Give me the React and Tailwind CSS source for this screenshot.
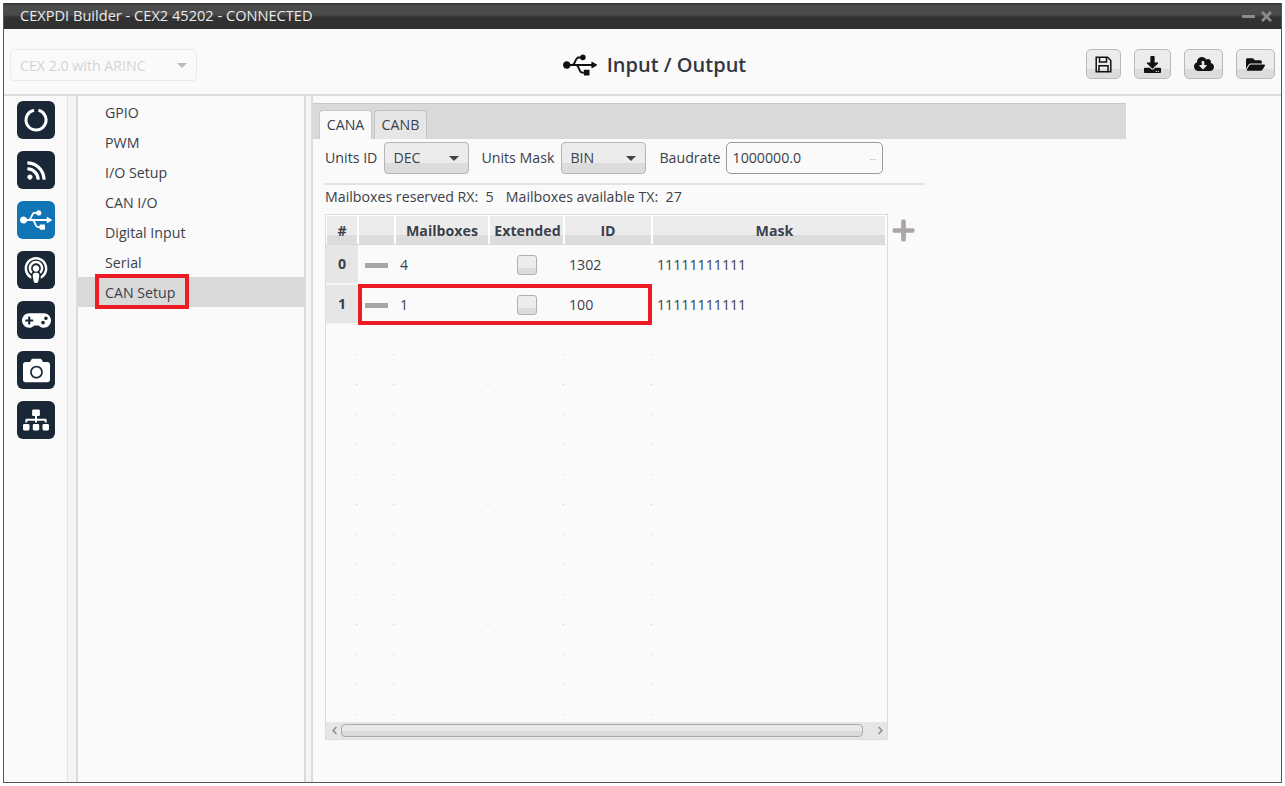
import React from 'react';
import {
  FaUsb, FaRss, FaPodcast, FaGamepad, FaCamera, FaSitemap, FaDownload,
  FaCloudDownloadAlt, FaFolderOpen, FaMinus, FaTimes, FaPlus, FaChevronLeft, FaChevronRight,
} from 'react-icons/fa';

const navItems = ['GPIO', 'PWM', 'I/O Setup', 'CAN I/O', 'Digital Input', 'Serial', 'CAN Setup'];
const columns = 'grid grid-cols-[32px_37px_94px_75px_88px_234px]';
const twoTone = 'bg-[linear-gradient(#ececec_68%,#dcdcdc_68%)]';

const RingIcon = () => (
  <svg width="26" height="26" viewBox="0 0 26 26" fill="none">
    <path d="M11 3.2 A10 10 0 1 0 15.5 3.3" stroke="white" strokeWidth="3" />
  </svg>
);

// floppy outline, the fa one has a dot where the reference has a label
const SaveIcon = () => (
  <svg width="17" height="17" viewBox="0 0 17 17" fill="none" stroke="#111" strokeWidth="1.5">
    <path d="M1.2 1.2H12.5L15.8 4.5V15.8H1.2Z" />
    <path d="M4.5 1.2V6H11.5V1.2" />
    <path d="M4 15.8V9.8H13V15.8" />
  </svg>
);

const rail = [
  { icon: <RingIcon /> },
  { icon: <FaRss size={21} /> },
  { icon: <FaUsb size={32} />, active: true },
  { icon: <FaPodcast size={26} /> },
  { icon: <FaGamepad size={29} /> },
  { icon: <FaCamera size={27} /> },
  { icon: <FaSitemap size={26} /> },
];

const Select = ({ value, width, className = '' }) => (
  <div className={`${width} ${twoTone} h-[32px] flex items-center justify-between pl-[8px] pr-[9px] border border-[#b5b5b5] rounded-[4px] ${className}`}>
    <span>{value}</span>
    <span className="w-0 h-0 border-x-[5px] border-x-transparent border-t-[5px] border-t-[#444]" />
  </div>
);

const ToolButton = ({ width, children }) => (
  <button className={`${width} ${twoTone} h-[30px] flex items-center justify-center border border-[#b9b9b9] rounded-[5px] text-[#111]`}>
    {children}
  </button>
);

const HeaderCell = ({ children, className = '' }) => (
  <div className={`${twoTone} h-[29px] pt-[2px] flex items-center justify-center font-bold border border-white border-b-0 ${className}`}>
    {children}
  </div>
);

const Row = ({ index, mailboxes, id, highlight }) => (
  <div className={`${columns} h-10 shrink-0 relative`}>
    <div className="bg-[#e6e6e6] border-b-2 border-[#f5f5f5] flex items-center justify-center font-bold">{index}</div>
    <div className="flex items-center pl-[7px]">
      <span className="w-[23px] h-[5px] bg-[#aaa6a6]" />
    </div>
    <div className="flex items-center pl-[5px]">{mailboxes}</div>
    <div className="flex items-center pl-[28px]">
      <span className={`${twoTone} w-[20px] h-[20px] border border-[#b0b0b0] rounded-[3px]`} />
    </div>
    <div className="flex items-center pl-[5px]">{id}</div>
    <div className="flex items-center pl-[5px]">11111111111</div>
    {highlight && <div className="absolute left-[32px] top-[-1px] w-[294px] h-[41px] border-[4px] border-[#ed1c24]" />}
  </div>
);

const EmptyRow = () => (
  <div className={`${columns} h-[30px] shrink-0`}>
    {[0, 1, 2, 3, 4, 5].map((c) => (
      <div key={c} className="flex items-end justify-end">
        {c < 5 && <span className="w-[2px] h-px bg-[#dedede]" />}
      </div>
    ))}
  </div>
);

export default function App() {
  return (
    <div className="w-screen h-screen bg-white p-[3px] font-['Open_Sans',sans-serif] text-[14.2px] text-[#3b3f4a] overflow-hidden">
      <div className="h-[780px] flex flex-col bg-[#fafafa] border border-t-0 border-[#555]">
        {/* Title bar */}
        <div className="h-[26px] shrink-0 flex items-center justify-between pl-[16px] pr-[7px] bg-[linear-gradient(#333_0,#4c4c4c_12%,#4a4a4a_45%,#323232_55%,#303030_100%)] text-[#ececec] text-[14.6px]">
          <span>CEXPDI Builder - CEX2 45202 - CONNECTED</span>
          <div className="flex items-center gap-[3px] text-[#8c8c8c]">
            <FaMinus size={15} />
            <FaTimes size={15} />
          </div>
        </div>

        {/* Header */}
        <div className="h-[67px] shrink-0 relative flex items-center justify-center border-b-2 border-[#dcdcdc]">
          <div className="absolute left-[6px] top-[20px] w-[187px] h-[32px] flex items-center justify-between pl-[9px] pr-[9px] pt-[1px] border border-[#e9e9e9] rounded-[4px] text-[#d4d4d4]">
            <span>CEX 2.0 with ARINC</span>
            <span className="w-0 h-0 border-x-[5px] border-x-transparent border-t-[5px] border-t-[#bdbdbd]" />
          </div>
          <div className="flex items-center gap-[10px] ml-[24px] mt-[6px]">
            <FaUsb size={34} className="text-[#111]" />
            <span className="text-[20px] font-semibold text-[#34363f]">Input / Output</span>
          </div>
          <div className="absolute right-[6px] top-[20px] flex gap-[13px]">
            <ToolButton width="w-[35px]"><SaveIcon /></ToolButton>
            <ToolButton width="w-[37px]"><FaDownload size={17} /></ToolButton>
            <ToolButton width="w-[39px]"><FaCloudDownloadAlt size={20} /></ToolButton>
            <ToolButton width="w-[39px]"><FaFolderOpen size={19} /></ToolButton>
          </div>
        </div>

        <div className="flex-1 flex min-h-0">
          {/* Icon rail */}
          <div className="w-[64px] shrink-0 flex flex-col gap-[12px] pt-[5px] pl-[13px] border-r border-[#e2e2e2]">
            {rail.map((item, i) => (
              <div
                key={i}
                className={`w-[38px] h-[38px] rounded-[6px] flex items-center justify-center text-white ${item.active ? 'bg-[#0f75b5]' : 'bg-[#192736]'}`}
              >
                {item.icon}
              </div>
            ))}
          </div>
          <div className="w-[10px] shrink-0 bg-[#f4f4f4] border-r-2 border-[#dcdcdc]" />

          {/* Section list */}
          <div className="w-[226px] shrink-0 pt-[1px]">
            {navItems.map((item) => {
              const selected = item === 'CAN Setup';
              return (
                <div key={item} className={`h-[30px] flex items-center pl-[27px] pt-[2px] relative ${selected ? 'bg-[#d9d9d9]' : ''}`}>
                  {item}
                  {selected && <div className="absolute left-[17px] top-[-3px] w-[94px] h-[35px] border-[4px] border-[#ed1c24]" />}
                </div>
              );
            })}
          </div>
          <div className="w-[9px] shrink-0 bg-[#f4f4f4] border-x-2 border-[#dcdcdc]" />

          {/* Content */}
          <div className="flex-1 min-w-0 pt-[7px]">
            <div className="w-[813px] h-[36px] bg-[#d9d9d9] border-t border-[#c8c8c8] flex items-end gap-[2px] pl-[6px]">
              <div className="w-[53px] h-[29px] bg-[#fafafa] border border-b-0 border-[#c9c9c9] rounded-t-[4px] flex items-center justify-center">CANA</div>
              <div className="w-[53px] h-[29px] bg-[#e6e6e6] border border-b-0 border-[#c4c4c4] rounded-t-[4px] flex items-center justify-center">CANB</div>
            </div>

            <div className="flex items-center mt-[3px] ml-[12px] h-[32px]">
              <span>Units ID</span>
              <Select value="DEC" width="w-[85px]" className="ml-[7px]" />
              <span className="ml-[12px]">Units Mask</span>
              <Select value="BIN" width="w-[85px]" className="ml-[7px]" />
              <span className="ml-[13px]">Baudrate</span>
              <div className="ml-[5px] w-[157px] h-[32px] flex items-center justify-between pl-[6px] pr-[5px] border border-[#9a9a9a] rounded-[5px] bg-[#fafafa]">
                <span>1000000.0</span>
                <span className="text-[#c8c8c8] text-[11px]">--</span>
              </div>
            </div>

            <div className="w-[600px] ml-[12px] mt-[9px] h-[2px] bg-[#e2e2e2]" />
            <div className="ml-[12px] h-[24px] flex items-center gap-[12px]">
              <span>Mailboxes reserved RX:&nbsp; 5</span>
              <span>Mailboxes available TX:&nbsp; 27</span>
            </div>

            <div className="flex items-start ml-[12px] mt-[5px]">
              <div className="w-[563px] h-[526px] flex flex-col border border-[#dcdcdc]">
                <div className={`${columns} w-[560px] shrink-0 border-b border-[#d8d8d8]`}>
                  <HeaderCell>#</HeaderCell>
                  <HeaderCell />
                  <HeaderCell>Mailboxes</HeaderCell>
                  <HeaderCell className="pl-[2px]">Extended</HeaderCell>
                  <HeaderCell>ID</HeaderCell>
                  <HeaderCell className="pl-[11px]">Mask</HeaderCell>
                </div>
                <div className="flex-1 min-h-0 overflow-hidden flex flex-col">
                  <Row index="0" mailboxes="4" id="1302" />
                  <Row index="1" mailboxes="1" id="100" highlight />
                  {[...Array(14)].map((_, i) => <EmptyRow key={i} />)}
                </div>
                <div className="h-[17px] shrink-0 bg-[#e6e6e6] flex items-center pl-[4px] text-[#8a8a8a]">
                  <FaChevronLeft size={9} />
                  <div className="ml-[2px] w-[522px] h-[13px] bg-[linear-gradient(#e8e8e8_55%,#dadada_55%)] border border-[#a9a9a9] rounded-[4px]" />
                  <FaChevronRight size={9} className="ml-[13px]" />
                </div>
              </div>
              <FaPlus size={25} className="ml-[3px] mt-[4px] text-[#aaa6a6]" />
            </div>
          </div>
        </div>
      </div>
    </div>
  );
}
